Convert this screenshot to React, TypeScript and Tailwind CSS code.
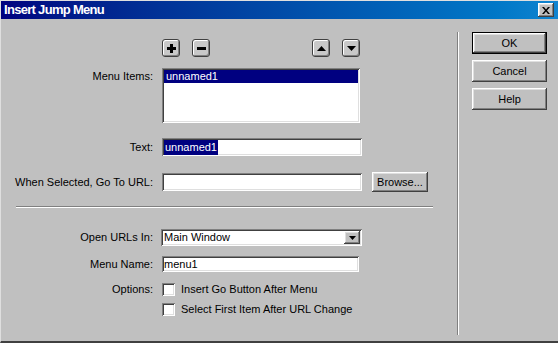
import React from "react";

const raised =
  "bg-[#c0c0c0] shadow-[inset_-1px_-1px_0_#404040,inset_1px_1px_0_#ffffff,inset_-2px_-2px_0_#808080,inset_2px_2px_0_#dfdfdf]";
const sunken =
  "bg-white shadow-[inset_1px_1px_0_#808080,inset_-1px_-1px_0_#ffffff,inset_2px_2px_0_#404040,inset_-2px_-2px_0_#dfdfdf]";

function IconButton({ children }: { children: React.ReactNode }) {
  return (
    <div className="w-[18px] h-[18px] rounded-[3px] border border-[#404040] bg-[#c8c8c8] shadow-[inset_1px_1px_0_#ffffff,inset_-1px_-1px_0_#808080] flex items-center justify-center">
      {children}
    </div>
  );
}

function Label({ children }: { children: React.ReactNode }) {
  return <div className="w-[152px] shrink-0 text-right">{children}</div>;
}

function Checkbox({ label }: { label: string }) {
  return (
    <div className="flex items-center">
      <div className={`w-[13px] h-[13px] ${sunken}`}></div>
      <span className="ml-[6px]">{label}</span>
    </div>
  );
}

function DialogButton({
  label,
  isDefault,
}: {
  label: string;
  isDefault?: boolean;
}) {
  if (isDefault) {
    return (
      <div className="w-[75px] h-[22px] border border-black">
        <div className={`w-full h-full flex items-center justify-center ${raised}`}>
          {label}
        </div>
      </div>
    );
  }
  return (
    <div className={`w-[75px] h-[22px] flex items-center justify-center ${raised}`}>
      {label}
    </div>
  );
}

export default function App() {
  return (
    <div className="w-[558px] h-[343px] bg-[#c0c0c0] border-l border-t border-l-[#dfdfdf] border-t-[#dfdfdf] border-b-2 border-b-[#404040] flex flex-col font-['Liberation_Sans',Arial,sans-serif] text-[11px] text-black leading-none">
      {/* Title bar */}
      <div className="h-[18px] shrink-0 bg-gradient-to-r from-[#000080] to-[#1084d0] flex items-start">
        <span className="text-white font-bold text-[13px] tracking-[-0.7px] ml-[3px] mt-[2px]">
          Insert Jump Menu
        </span>
        <div className={`ml-auto mr-[4px] mt-[2px] w-[16px] h-[14px] flex items-center justify-center ${raised}`}>
          <svg width="8" height="7" viewBox="0 0 8 7">
            <path d="M0 0h2l2 2.5L6 0h2L5 3.5 8 7H6L4 4.5 2 7H0l3-3.5z" fill="#000" />
          </svg>
        </div>
      </div>

      <div className="flex flex-1">
        {/* Left panel */}
        <div className="w-[456px] shrink-0 pt-[20px] flex flex-col">
          {/* Add / remove / move buttons */}
          <div className="flex">
            <Label>{""}</Label>
            <div className="ml-[9px] w-[198px] flex">
              <IconButton>
                <svg width="9" height="9" viewBox="0 0 9 9">
                  <path d="M3 0h3v3h3v3H6v3H3V6H0V3h3z" fill="#000" />
                </svg>
              </IconButton>
              <div className="ml-[12px]">
                <IconButton>
                  <svg width="9" height="3" viewBox="0 0 9 3">
                    <rect width="9" height="3" fill="#000" />
                  </svg>
                </IconButton>
              </div>
              <div className="ml-auto">
                <IconButton>
                  <svg width="9" height="5" viewBox="0 0 9 5">
                    <path d="M4.5 0L9 5H0z" fill="#000" />
                  </svg>
                </IconButton>
              </div>
              <div className="ml-[12px]">
                <IconButton>
                  <svg width="9" height="5" viewBox="0 0 9 5">
                    <path d="M0 0h9L4.5 5z" fill="#000" />
                  </svg>
                </IconButton>
              </div>
            </div>
          </div>

          {/* Menu items */}
          <div className="flex mt-[11px]">
            <Label>
              <div className="pt-[3px]">Menu Items:</div>
            </Label>
            <div className={`ml-[9px] w-[198px] h-[55px] p-[2px] ${sunken}`}>
              <div className="h-[13px] bg-[#000080] text-white pl-[2px] flex items-center">
                unnamed1
              </div>
            </div>
          </div>

          {/* Text */}
          <div className="flex items-center mt-[15px]">
            <Label>Text:</Label>
            <div className={`ml-[9px] w-[200px] h-[18px] px-[2px] flex items-center ${sunken}`}>
              <span className="bg-[#000080] text-white px-[1px] py-[2px]">unnamed1</span>
            </div>
          </div>

          {/* URL */}
          <div className="flex items-center mt-[16px]">
            <Label>When Selected, Go To URL:</Label>
            <div className={`ml-[9px] w-[200px] h-[18px] ${sunken}`}></div>
            <div className={`ml-[10px] w-[56px] h-[20px] flex items-center justify-center ${raised}`}>
              Browse...
            </div>
          </div>

          {/* Separator */}
          <div className="ml-[15px] mt-[14px] w-[417px] border-t border-t-[#808080] border-b border-b-white"></div>

          {/* Open URLs in */}
          <div className="flex items-center mt-[21px]">
            <Label>Open URLs In:</Label>
            <div className={`ml-[8px] w-[201px] h-[17px] flex items-center pl-[3px] pr-[2px] ${sunken}`}>
              <span>Main Window</span>
              <div className={`ml-auto w-[16px] h-[13px] flex items-center justify-center ${raised}`}>
                <svg width="7" height="4" viewBox="0 0 7 4">
                  <path d="M0 0h7L3.5 4z" fill="#000" />
                </svg>
              </div>
            </div>
          </div>

          {/* Menu name */}
          <div className="flex items-center mt-[10px]">
            <Label>Menu Name:</Label>
            <div className={`ml-[9px] w-[197px] h-[16px] px-[2px] flex items-center ${sunken}`}>
              menu1
            </div>
          </div>

          {/* Options */}
          <div className="flex mt-[11px]">
            <Label>
              <div className="pt-[1px]">Options:</div>
            </Label>
            <div className="ml-[9px] flex flex-col gap-[7px]">
              <Checkbox label="Insert Go Button After Menu" />
              <Checkbox label="Select First Item After URL Change" />
            </div>
          </div>
        </div>

        {/* Vertical separator */}
        <div className="mt-[13px] h-[303px] w-[2px] border-l border-l-[#808080] border-r border-r-white"></div>

        {/* Right buttons */}
        <div className="ml-[13px] mt-[13px] flex flex-col gap-[6px]">
          <DialogButton label="OK" isDefault />
          <DialogButton label="Cancel" />
          <DialogButton label="Help" />
        </div>
      </div>
    </div>
  );
}
